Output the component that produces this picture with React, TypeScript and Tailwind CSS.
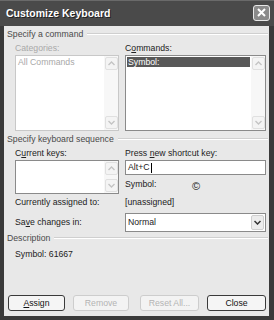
import React from "react";

const font = { fontFamily: '"Liberation Sans", Arial, sans-serif' };

function Up({ disabled = true }: { disabled?: boolean }) {
  return (
    <div className="w-[13px] h-[13px] bg-[#f4f4f4] border border-[#e0e0e0] rounded-[2px] flex items-center justify-center">
      <svg width="7" height="5" viewBox="0 0 7 5">
        <path d="M0.5 4 L3.5 1 L6.5 4" fill="none" stroke={disabled ? "#c4c4c4" : "#444"} strokeWidth="1.4" />
      </svg>
    </div>
  );
}
function Down({ disabled = true }: { disabled?: boolean }) {
  return (
    <div className="w-[13px] h-[13px] bg-[#f4f4f4] border border-[#e0e0e0] rounded-[2px] flex items-center justify-center">
      <svg width="7" height="5" viewBox="0 0 7 5">
        <path d="M0.5 1 L3.5 4 L6.5 1" fill="none" stroke={disabled ? "#c4c4c4" : "#444"} strokeWidth="1.4" />
      </svg>
    </div>
  );
}

function Scroll() {
  return (
    <div className="w-[14px] h-full bg-[#f7f7f7] flex flex-col justify-between items-center py-[1px]">
      <Up />
      <Down />
    </div>
  );
}

function GroupHeader({ text }: { text: string }) {
  return (
    <div className="flex items-center h-[12px] gap-[4px]">
      <span className="text-[#4a4a4a] whitespace-nowrap">{text}</span>
      <div className="flex-1 h-[2px] border-t border-[#cfcfcf] border-b border-b-white" />
    </div>
  );
}

function Btn({ children, disabled }: { children: React.ReactNode; disabled?: boolean }) {
  return (
    <div
      className={
        "h-[16px] rounded-[3px] flex items-center justify-center " +
        (disabled
          ? "border border-[#cdcdcd] text-[#b4b4b4] bg-[#f3f3f3]"
          : "border border-[#3a3a3a] text-[#111] bg-[#f5f5f5]")
      }
    >
      <span>{children}</span>
    </div>
  );
}

export default function App() {
  return (
    <div className="w-[274px] h-[320px] bg-[#3a3a3a] flex flex-col text-[8.7px] leading-none" style={font}>
      {/* title bar */}
      <div className="h-[26px] bg-[#4a4a4a] flex items-center justify-between pl-[6px] pr-[4px] shrink-0 border-t border-[#6a6a6a]">
        <span className="text-white font-bold text-[10.5px]" style={{ textShadow: "1px 1px 0 #222" }}>
          Customize Keyboard
        </span>
        <div className="w-[17px] h-[16px] rounded-[3px] border border-[#e8e8e8] bg-[#8a8a8a] flex items-center justify-center mb-[2px]">
          <svg width="9" height="9" viewBox="0 0 9 9">
            <path d="M1 1 L8 8 M8 1 L1 8" stroke="white" strokeWidth="2" />
          </svg>
        </div>
      </div>
      {/* body */}
      <div className="flex-1 bg-[#e8e8e8] ml-[4px] mr-[5px] mb-[4px] pl-[3px] pr-[1px] pt-[2px] flex flex-col text-[#222]">
        <GroupHeader text="Specify a command" />
        <div className="flex gap-[6px] pl-[8px] pr-[2px] mt-[2px]">
          <div className="w-[104px] flex flex-col">
            <div className="h-[12px] flex items-center text-[#a8a8a8]">
              <span>Categories:</span>
            </div>
            <div className="h-[76px] mt-[1px] border border-[#c8c8c8] bg-white flex">
              <div className="flex-1 pl-[2px] pt-[2px] text-[#a8a8a8]">All Commands</div>
              <Scroll />
            </div>
          </div>
          <div className="flex-1 flex flex-col">
            <div className="h-[12px] flex items-center">
              <span>
                C<span className="underline">o</span>mmands:
              </span>
            </div>
            <div className="h-[76px] mt-[1px] border border-[#8a8a8a] bg-white flex">
              <div className="flex-1 p-[1px]">
                <div className="h-[10px] bg-[#585858] text-white flex items-center pl-[1px]">Symbol:</div>
              </div>
              <Scroll />
            </div>
          </div>
        </div>

        <div className="mt-[2px]">
          <GroupHeader text="Specify keyboard sequence" />
        </div>
        <div className="flex gap-[6px] pl-[8px] pr-[2px] mt-[2px]">
          <div className="w-[104px] flex flex-col">
            <div className="h-[12px] flex items-center">
              <span>
                C<span className="underline">u</span>rrent keys:
              </span>
            </div>
            <div className="h-[34px] mt-[1px] border border-[#8a8a8a] bg-white flex">
              <div className="flex-1" />
              <Scroll />
            </div>
          </div>
          <div className="flex-1 flex flex-col">
            <div className="h-[12px] flex items-center">
              <span>
                Press <span className="underline">n</span>ew shortcut key:
              </span>
            </div>
            <div className="h-[15px] mt-[1px] border border-[#8a8a8a] bg-white flex items-center pl-[2px]">
              <span>Alt+C</span>
              <span className="inline-block w-px h-[10px] bg-black ml-[1px]" />
            </div>
            <div className="h-[19px] flex items-center">
              <span className="w-[67px]">Symbol:</span>
              <span className="text-[11px] mt-[3px]">©</span>
            </div>
          </div>
        </div>
        <div className="flex gap-[6px] pl-[8px] h-[17px] items-center">
          <div className="w-[104px]">Currently assigned to:</div>
          <div>[unassigned]</div>
        </div>
        <div className="flex gap-[6px] pl-[8px] pr-[2px] mt-[2px] items-center">
          <div className="w-[104px]">
            <span>
              Sa<span className="underline">v</span>e changes in:
            </span>
          </div>
          <div className="flex-1 h-[19px] border border-[#8a8a8a] bg-white flex items-center pl-[2px] pr-[1px]">
            <div className="flex-1">Normal</div>
            <div className="w-[13px] h-[15px] bg-[#ececec] border border-[#cfcfcf] rounded-[2px] flex items-center justify-center">
              <svg width="7" height="5" viewBox="0 0 7 5">
                <path d="M0.5 1 L3.5 4 L6.5 1" fill="none" stroke="#333" strokeWidth="1.5" />
              </svg>
            </div>
          </div>
        </div>
        <div className="mt-[0px]">
          <GroupHeader text="Description" />
        </div>
        <div className="pl-[8px] h-[16px] flex items-center mt-[2px]">
          <span>Symbol: 61667</span>
        </div>
        <div className="flex-1" />
        <div className="flex gap-[8px] pl-[1px] pr-[2px] mb-[5px]">
          <div className="w-[57px]">
            <Btn>
              <span className="underline">A</span>ssign
            </Btn>
          </div>
          <div className="w-[56px]">
            <Btn disabled>Remove</Btn>
          </div>
          <div className="w-[59px] ml-[3px]">
            <Btn disabled>Reset All...</Btn>
          </div>
          <div className="flex-1 ml-[0px]">
            <Btn>Close</Btn>
          </div>
        </div>
      </div>
    </div>
  );
}
